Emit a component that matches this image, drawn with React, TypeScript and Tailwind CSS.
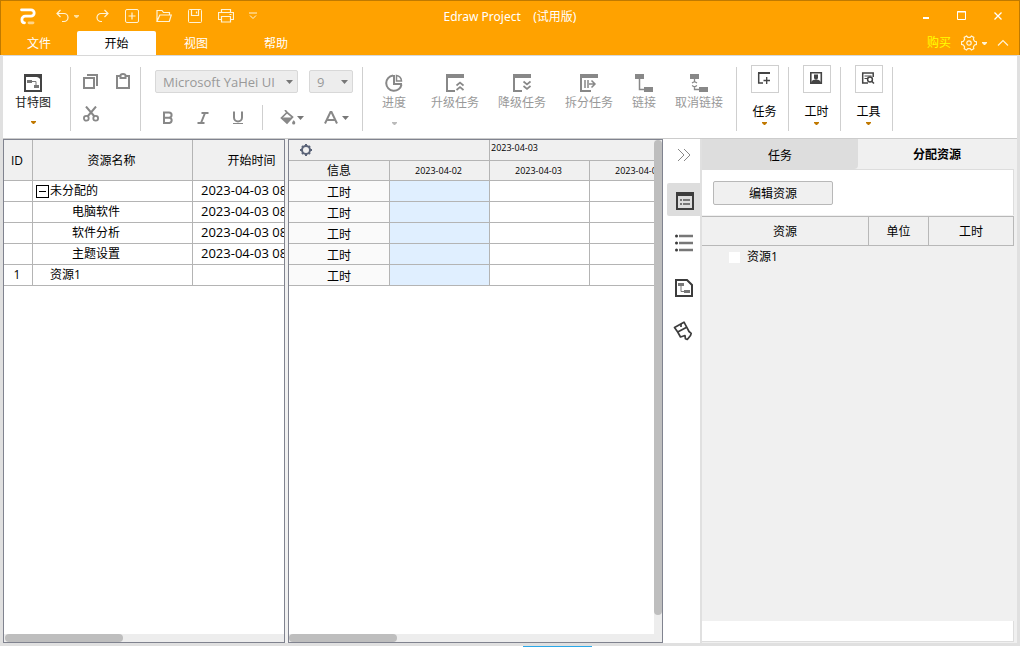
import React, { useState } from 'react'
import { clsx } from 'clsx'

interface ResourceRow {
  id: string
  name: string
  start: string
  level: 'group' | 'task' | 'resource'
}

const resources: ResourceRow[] = [
  { id: '', name: '未分配的', start: '2023-04-03 08', level: 'group' },
  { id: '', name: '电脑软件', start: '2023-04-03 08', level: 'task' },
  { id: '', name: '软件分析', start: '2023-04-03 08', level: 'task' },
  { id: '', name: '主题设置', start: '2023-04-03 08', level: 'task' },
  { id: '1', name: '资源1', start: '', level: 'resource' },
]

const days = ['2023-04-02', '2023-04-03', '2023-04-04']
const menuTabs = ['文件', '开始', '视图', '帮助']

function Caret({ className }: { className?: string }) {
  return (
    <svg width="7" height="4" viewBox="0 0 7 4" className={clsx('shrink-0', className)} fill="currentColor">
      <path d="M0 0h7L3.5 4z" />
    </svg>
  )
}

function SmallCaret({ className }: { className?: string }) {
  return (
    <svg width="5" height="3" viewBox="0 0 5 3" className={clsx('shrink-0', className)} fill="currentColor">
      <path d="M0 0h5v1L3 3H2L0 1z" />
    </svg>
  )
}

function Icon({ size = 18, children }: { size?: number; children: React.ReactNode }) {
  return (
    <svg width={size} height={size} viewBox={`0 0 ${size} ${size}`} fill="none" stroke="currentColor" className="shrink-0">
      {children}
    </svg>
  )
}

function Divider() {
  return <div className="w-px h-16 mt-[11px] shrink-0 bg-[#cfcfcf]" />
}

function Logo() {
  return (
    <svg width="16" height="17" viewBox="0 0 16 17" fill="none" strokeLinecap="round" strokeLinejoin="round">
      <path d="M1.5 1.8H11a3.2 3.2 0 0 1 0 6.4H5.5a3.3 3.3 0 0 0-3.6 3.3c0 2 .8 3.3 2.6 3.3" stroke="#fff" strokeWidth="2.8" />
      <path d="M9 14.8h4" stroke="#ffd58a" strokeWidth="2.8" />
    </svg>
  )
}

function TitleBar() {
  return (
    <div className="grid grid-cols-[1fr_auto_1fr] items-center h-[30px]">
      <div className="flex items-center text-[#fff3d6]">
        <div className="ml-[19px] mr-5"><Logo /></div>
        <button aria-label="撤销">
          <Icon size={14}><path d="M4.5 1L1 4.5 4.5 8M1.5 4.5H8a4 4 0 0 1 0 8H6" strokeWidth="1.2" /></Icon>
        </button>
        <SmallCaret className="ml-1 mr-4 text-[#ffe0a0]" />
        <button aria-label="恢复">
          <Icon size={14}><path d="M9.5 1L13 4.5 9.5 8M12.5 4.5H6a4 4 0 0 0 0 8h1" strokeWidth="1.2" /></Icon>
        </button>
        <button aria-label="新建" className="ml-4">
          <Icon size={14}><rect x="0.5" y="0.5" width="13" height="13" rx="1.5" /><path d="M7 3.5v7M3.5 7h7" strokeWidth="1.2" /></Icon>
        </button>
        <button aria-label="打开" className="ml-[17px]">
          <Icon size={16}><path d="M1 13.5V2.5h5l1.5 2h6V7M1 13.5L3.8 7h11.5l-2 6.5z" strokeWidth="1.2" /></Icon>
        </button>
        <button aria-label="保存" className="ml-4">
          <Icon size={14}><rect x="0.5" y="0.5" width="13" height="13" rx="1" /><path d="M3.5 1v5.5h7V1M8.5 2.5v2" strokeWidth="1.2" /></Icon>
        </button>
        <button aria-label="打印" className="ml-4">
          <Icon size={16}><path d="M3.5 4.5V1.5h9v3M3.5 11.5h-3v-7h15v7h-3M3.5 8.5h9v5.5h-9zM11.5 6.5h2" strokeWidth="1.2" /></Icon>
        </button>
        <button aria-label="自定义快速访问" className="ml-[15px]">
          <Icon size={8}><path d="M0 1h8M1 3.5L4 6.5l3-3" /></Icon>
        </button>
      </div>
      <h1 className="whitespace-pre pt-[2px] text-white font-['Noto_Sans','Noto_Sans_CJK_SC',sans-serif]">Edraw Project{'    '}(试用版)</h1>
      <div className="flex justify-end pr-[3px] text-white">
        <button aria-label="最小化" className="w-9 flex justify-center"><Icon size={10}><path d="M2 7h6" strokeWidth="2" /></Icon></button>
        <button aria-label="最大化" className="w-9 flex justify-center"><Icon size={10}><path d="M.5.5h8v8h-8zM0 1h9" /></Icon></button>
        <button aria-label="关闭" className="w-9 flex justify-center"><Icon size={10}><path d="M1.5 1.5l7 7M8.5 1.5l-7 7" strokeWidth="1.3" /></Icon></button>
      </div>
    </div>
  )
}

function MenuBar({ active, onSelect }: { active: string; onSelect: (tab: string) => void }) {
  return (
    <div className="flex h-6">
      {menuTabs.map(tab => (
        <button
          key={tab}
          onClick={() => onSelect(tab)}
          className={clsx(
            'h-full pt-[2px] first:w-[76px]',
            tab === active ? 'w-[79px] rounded-t-xs bg-white text-black' : 'w-20 text-white'
          )}
        >
          {tab}
        </button>
      ))}
      <div className="ml-auto flex items-center pr-[10px] text-[#fff3d6]">
        <a href="#buy" className="mr-[10px] text-[#ffff00]">购买</a>
        <button aria-label="设置">
          <Icon size={16}>
            <path d="M5.6 1l1.2 1.4h2.4L10.4 1l2.4 1.4-.4 1.9 1.2 2 1.9.5v2.6l-1.9.5-1.2 2 .4 1.8-2.4 1.4-1.2-1.4H6.8l-1.2 1.4-2.4-1.4.4-1.8-1.2-2L.5 9.4V6.8l1.9-.5 1.2-2-.4-1.9z" strokeWidth="1.2" />
            <circle cx="8" cy="8" r="2.2" strokeWidth="1.2" />
          </Icon>
        </button>
        <SmallCaret className="ml-[5px] mr-[10px]" />
        <button aria-label="折叠功能区">
          <Icon size={12}><path d="M1 8.5l5-5 5 5" strokeWidth="1.2" /></Icon>
        </button>
      </div>
    </div>
  )
}

function CommandButton({ label, caret, children }: { label: string; caret?: boolean; children: React.ReactNode }) {
  return (
    <button disabled className="flex flex-col items-center shrink-0 whitespace-nowrap pt-[18px] text-[#999] first:mr-[6px]">
      <span className="text-[#888]"><Icon>{children}</Icon></span>
      <span className="mt-[3px] leading-4">{label}</span>
      {caret && <SmallCaret className="mt-[11px] text-[#bbb]" />}
    </button>
  )
}

function BoxedButton({ label, children }: { label: string; children: React.ReactNode }) {
  return (
    <button className="flex flex-col items-center shrink-0 w-[51px] pl-1 pt-[9px] text-black">
      <span className="flex items-start justify-center w-7 h-7 pt-[5px] pr-[2px] border border-[#cfcfcf] text-[#444]">
        <Icon size={14}>{children}</Icon>
      </span>
      <span className="mt-[11px] leading-4">{label}</span>
      <SmallCaret className="mt-[2px] text-[#c07800]" />
    </button>
  )
}

function Ribbon() {
  return (
    <div className="flex items-start h-[83px] overflow-hidden border-b border-[#ccc] bg-white">
      <button className="flex flex-col items-center shrink-0 w-[67px] pr-[7px] pt-[18px] text-[#222]">
        <span className="text-[#444]">
          <Icon>
            <path d="M1 1h16v16H1z" strokeWidth="2" />
            <path d="M1 0h16v3H1zM11 2h6v6c0-3-2-5-6-5z" fill="currentColor" stroke="none" />
            <path d="M8 7.5h4v3.5" stroke="#777" />
            <path d="M3 6h5v3H3zM10 11h5v3h-5z" fill="#777" stroke="none" />
          </Icon>
        </span>
        <span className="mt-[3px] leading-4">甘特图</span>
        <SmallCaret className="mt-[10px] text-[#c07800]" />
      </button>
      <Divider />

      {/* Clipboard */}
      <div className="grid grid-cols-[16px_16px] gap-4 w-[69px] shrink-0 pl-3 pt-[17px] text-[#888]">
        <button aria-label="复制">
          <Icon size={16}><path d="M1 5h10v10H1z" strokeWidth="2" /><path d="M4 2h10v11" strokeWidth="2" /></Icon>
        </button>
        <button aria-label="粘贴">
          <Icon size={16}><path d="M2 3h12v12H2z" strokeWidth="2" /><path d="M5.5 2.5c0-2 5-2 5 0V5h-5z" strokeWidth="2" fill="#fff" /></Icon>
        </button>
        <button aria-label="剪切" className="pt-px">
          <Icon size={16}>
            <path d="M3 .5l8.5 10M13 .5l-8.5 10" strokeWidth="2" />
            <circle cx="3.3" cy="12.3" r="2.4" strokeWidth="1.8" />
            <circle cx="12.7" cy="12.3" r="2.4" strokeWidth="1.8" />
          </Icon>
        </button>
      </div>
      <Divider />

      {/* Font */}
      <div className="w-[221px] shrink-0 pl-[14px] pt-[14px]">
        <div className="flex gap-[11px]">
          <label className="flex items-center w-[143px] h-[23px] px-1 rounded-xs border border-[#d8d8d8] bg-[#ededed] text-[#999]">
            <select aria-label="字体" disabled className="flex-1 min-w-0 pl-[3px] appearance-none text-[13px] leading-5 opacity-100">
              <option>Microsoft YaHei UI</option>
            </select>
            <Caret className="text-[#777]" />
          </label>
          <label className="flex items-center w-11 h-[23px] px-1 rounded-xs border border-[#d8d8d8] bg-[#ededed] text-[#999]">
            <select aria-label="字号" disabled className="flex-1 min-w-0 pl-[3px] appearance-none text-[13px] leading-5 opacity-100">
              <option>9</option>
            </select>
            <Caret className="text-[#777]" />
          </label>
        </div>
        <div className="flex items-center mt-3 h-[25px] text-[#888]">
          <button aria-label="粗体" className="ml-[5px]">
            <Icon size={16}><path d="M4 2.5V13h5.5a2.7 2.7 0 0 0 0-5.3H4h5a2.5 2.5 0 0 0 0-5.2z" strokeWidth="2" /></Icon>
          </button>
          <button aria-label="斜体" className="ml-5">
            <Icon size={16}><path d="M5.5 3h7M1.5 13h7M9 3L5 13" strokeWidth="2" /></Icon>
          </button>
          <button aria-label="下划线" className="ml-[18px]">
            <Icon size={16}><path d="M4 1.5v6a4 4 0 0 0 8 0v-6" strokeWidth="2" /><path d="M3 13.5h10" /></Icon>
          </button>
          <div className="w-px h-full ml-4 bg-[#cfcfcf]" />
          <button className="flex items-center ml-[17px] gap-px" aria-label="填充颜色">
            <Icon size={16}>
              <path d="M5 0l2 2.5L1.5 8 7 13l5.5-6L7 2.5" strokeWidth="1.7" />
              <path d="M2 7.500h10.500L7 13zM13.800 10c.8 1.300 1.500 2 1.500 3a1.600 1.600 0 0 1-3.200 0c0-1 .9-1.700 1.700-3z" fill="currentColor" stroke="none" />
            </Icon>
            <Caret className="text-[#777]" />
          </button>
          <button className="flex items-center ml-5 gap-1" aria-label="字体颜色">
            <Icon size={14}><path d="M1 12.500L6.500 1h1L13 12.500M3.500 9h7" strokeWidth="2" /></Icon>
            <Caret className="text-[#777]" />
          </button>
        </div>
      </div>
      <Divider />

      {/* Task commands */}
      <div className="flex items-start gap-[19px] w-[373px] shrink-0 pl-[19px]">
        <CommandButton label="进度" caret>
          <path d="M8 1.500a7.700 7.700 0 1 0 8.500 9M9 1v9h8" strokeWidth="2" />
          <path d="M11.500 1.500A6 6 0 0 1 16.500 7h-5z" strokeWidth="1.5" />
        </CommandButton>
        <CommandButton label="升级任务">
          <path d="M0 2h18" strokeWidth="4" /><path d="M1 3v14h8" strokeWidth="2" />
          <path d="M10.500 11.500L14 8.500l3.500 3M10.500 16L14 13l3.500 3" strokeWidth="1.7" />
        </CommandButton>
        <CommandButton label="降级任务">
          <path d="M0 2h18" strokeWidth="4" /><path d="M1 3v14h8" strokeWidth="2" />
          <path d="M10.500 7.500L14 10.500l3.500-3M10.500 12L14 15l3.500-3" strokeWidth="1.7" />
        </CommandButton>
        <CommandButton label="拆分任务">
          <path d="M0 2h18" strokeWidth="4" /><path d="M1 3v14h10" strokeWidth="2" />
          <path d="M5 6v8M8 6v8M9 10h6M11.500 6.500L15 10l-3.500 3.500" strokeWidth="1.5" />
        </CommandButton>
        <CommandButton label="链接">
          <path d="M0 0h9v5H0zM9 13h9v5H9z" fill="currentColor" stroke="none" />
          <path d="M4.500 5v10.500H9" strokeWidth="1.5" />
        </CommandButton>
        <CommandButton label="取消链接">
          <path d="M0 0h9v5H0zM9 13h9v5H9z" fill="currentColor" stroke="none" />
          <path d="M4.500 5v3.500M4.500 12v3.500H9M2 9l2.500-1.500L7 9M2 11.500l2.500 1.500L7 11.500" strokeWidth="1.3" />
        </CommandButton>
      </div>
      <Divider />

      <BoxedButton label="任务">
        <path d="M1 2h12" strokeWidth="2" /><path d="M1.700 2v10H6" strokeWidth="1.5" />
        <path d="M6.500 9.500H13M9.700 6v7" strokeWidth="1.3" />
      </BoxedButton>
      <Divider />
      <BoxedButton label="工时">
        <path d="M1.800 1.800h10.500v10.500H1.800z" strokeWidth="1.6" />
        <path d="M2 12.500c0-2.500 2-4 5-4s5 1.500 5 4zM5 3.500h4v4l-2 1-2-1z" fill="currentColor" stroke="none" />
      </BoxedButton>
      <Divider />
      <BoxedButton label="工具">
        <path d="M7 12H1.700V2h10.500v4" strokeWidth="1.5" /><path d="M3.500 5h7M3.500 7.500H6" />
        <circle cx="9" cy="8.500" r="2.400" strokeWidth="1.5" /><path d="M10.700 10.200l2.300 2.300" strokeWidth="1.5" />
      </BoxedButton>
      <Divider />
    </div>
  )
}

function ResourceTable() {
  const [open, setOpen] = useState(true)
  const rows = open ? resources : resources.filter(r => r.level !== 'task')
  const cell = 'h-[21px] p-0 border-r border-b border-[#b4b4b4] leading-4'

  return (
    <section className="flex flex-col w-[282px] shrink-0 border border-[#80838f] bg-white">
      <div className="flex-1 min-h-0 overflow-hidden">
        <table className="w-[309px] table-fixed border-separate border-spacing-0 whitespace-nowrap">
          <colgroup>
            <col className="w-[29px]" />
            <col className="w-40" />
            <col className="w-[120px]" />
          </colgroup>
          <thead>
            <tr className="bg-[#f0f0f0]">
              {['ID', '资源名称', '开始时间'].map(h => (
                <th key={h} className="h-[41px] p-0 pt-[2px] pr-[2px] border-r border-b border-[#b4b4b4] font-normal">{h}</th>
              ))}
            </tr>
          </thead>
          <tbody>
            {rows.map(r => (
              <tr key={r.name}>
                <td className={clsx(cell, 'text-center pr-[2px]')}>{r.id}</td>
                <td className={cell}>
                  <div className={clsx(
                    'flex items-center gap-px',
                    r.level === 'group' && 'pl-[3px]',
                    r.level === 'task' && 'pl-[39px]',
                    r.level === 'resource' && 'pl-[17px]'
                  )}>
                    {r.level === 'group' && (
                      <button
                        aria-label="展开或折叠"
                        onClick={() => setOpen(!open)}
                        className="flex items-center justify-center w-[13px] h-[13px] border border-black"
                      >
                        <span className="w-[7px] h-px bg-black" />
                      </button>
                    )}
                    {r.name}
                  </div>
                </td>
                <td className={clsx(cell, 'pl-2 pb-[2px] text-[13px]')}>{r.start}</td>
              </tr>
            ))}
          </tbody>
        </table>
      </div>
      <div className="h-2 pl-px bg-[#ededed]">
        <div className="w-[118px] h-full rounded-full bg-[#bebebe]" />
      </div>
    </section>
  )
}

function Timeline() {
  return (
    <section className="flex flex-col flex-1 min-w-0 border border-[#80838f] bg-white">
      <div className="flex flex-1 min-h-0">
        <div className="flex-1 min-w-0 overflow-hidden">
          <table className="w-[401px] table-fixed border-separate border-spacing-0 whitespace-nowrap">
            <colgroup>
              <col className="w-[101px]" />
              <col className="w-[100px]" />
              <col className="w-[100px]" />
              <col className="w-[100px]" />
            </colgroup>
            <thead className="bg-[#f0f0f0]">
              <tr>
                <th colSpan={2} className="h-[21px] p-0 border-r border-b border-[#b4b4b4]">
                  <button aria-label="时间轴设置" className="flex ml-[10px] text-[#5b6478]">
                    <Icon size={14}>
                      <circle cx="7" cy="7" r="4" strokeWidth="2" />
                      <path d="M7 1v2M7 11v2M1 7h2M11 7h2M3 3l1 1M10 10l1 1M3 11l1-1M10 4l1-1" strokeWidth="2" />
                    </Icon>
                  </button>
                </th>
                <th colSpan={2} className="p-0 pl-px pb-1 border-b border-[#b4b4b4] text-left align-top text-[9px] leading-4 font-normal">2023-04-03</th>
              </tr>
              <tr>
                <th className="h-5 p-0 border-r border-b border-[#b4b4b4] font-normal leading-4">信息</th>
                {days.map(d => (
                  <th key={d} className="p-0 pr-[2px] border-r border-b border-[#b4b4b4] text-[9px] leading-4 font-normal">{d}</th>
                ))}
              </tr>
            </thead>
            <tbody>
              {resources.map(r => (
                <tr key={r.name}>
                  <td className="h-[21px] p-0 pt-1 border-r border-b border-[#b4b4b4] bg-[#fafafa] text-center leading-4">工时</td>
                  {days.map((d, i) => (
                    <td key={d} className={clsx('p-0 border-r border-b border-[#b4b4b4]', i === 0 && 'bg-[#e0efff]')} />
                  ))}
                </tr>
              ))}
            </tbody>
          </table>
        </div>
        <div className="w-2 pb-[19px] bg-[#ededed]">
          <div className="h-full rounded-full bg-[#bebebe]" />
        </div>
      </div>
      <div className="h-2 bg-[#ededed]">
        <div className="w-[108px] h-full rounded-full bg-[#bebebe]" />
      </div>
    </section>
  )
}

function SideBar() {
  return (
    <nav className="flex flex-col w-[37px] shrink-0 pl-1 bg-white text-[#3c3c3c]">
      <button aria-label="收起面板" className="flex items-center justify-center h-8 text-[#888]">
        <Icon size={14}><path d="M1 1l6 6-6 6M7 1l6 6-6 6" /></Icon>
      </button>
      <button aria-label="任务窗格" className="flex items-center justify-center h-[33px] mt-3 pl-[3px] pt-[3px] rounded-l-xs bg-[#ddd]">
        <Icon>
          <path d="M1 2h16v15H1z" strokeWidth="2" /><path d="M0 2h18" strokeWidth="4" />
          <path d="M4 8h2M7 8h7M4 12h2M7 12h7" strokeWidth="2" stroke="#777" />
        </Icon>
      </button>
      <button aria-label="列表" className="flex items-center justify-center h-[33px] mt-[10px]">
        <Icon>
          <path d="M1.500 2h.01M1.500 9h.01M1.500 16h.01" strokeWidth="3" strokeLinecap="round" />
          <path d="M4 2h14M4 9h14M4 16h14" strokeWidth="2.600" stroke="#777" />
        </Icon>
      </button>
      <button aria-label="页面" className="flex items-center justify-center h-[33px] mt-3">
        <Icon>
          <path d="M1 1h11l5 5v11H1z" strokeWidth="2" />
          <path d="M3 4h6v3H3zM9 11h6v3H9z" fill="#777" stroke="none" /><path d="M6 7v5.500h3" stroke="#777" />
        </Icon>
      </button>
      <button aria-label="格式刷" className="flex items-center justify-center h-[33px] mt-[10px] pr-[2px]">
        <Icon size={20}>
          <path d="M1.500 6.500L11 1.200l2.700 5L16 10.500l2.200 1.800-.7 2.200-3.200 4-1.900-.8-.4-3.200-4.500 1.500L4.700 11z" strokeWidth="1.7" strokeLinejoin="round" />
          <path d="M4.700 11l9-4.800M8 3v3" strokeWidth="1.7" />
        </Icon>
      </button>
    </nav>
  )
}

function AssignPanel() {
  const [tab, setTab] = useState('分配资源')
  return (
    <aside className="flex flex-col w-[317px] shrink-0 pr-[3px] border-l-2 border-[#e0e0e0] bg-[#f0f0f0]">
      <div className="flex h-[30px]">
        {['任务', '分配资源'].map(t => (
          <button
            key={t}
            onClick={() => setTab(t)}
            className={clsx('w-1/2', t === tab ? 'pt-[2px] pl-[2px] font-bold' : 'pt-1 rounded-br-sm bg-[#ddd]')}
          >
            {t}
          </button>
        ))}
      </div>
      <div className="h-[46px] pl-[11px] pt-[11px] border-t border-r border-[#ddd] bg-white">
        <button className="w-[120px] h-6 pt-[2px] rounded-xs border border-[#b8b8b8] bg-[#f0f0f0]">编辑资源</button>
      </div>
      <table className="w-full mt-px table-fixed border-separate border-spacing-0">
        <colgroup>
          <col />
          <col className="w-[60px]" />
          <col className="w-[85px]" />
        </colgroup>
        <thead>
          <tr>
            {['资源', '单位', '工时'].map(h => (
              <th key={h} className="h-[30px] p-0 pt-[2px] border-y border-r border-[#b8b8b8] font-normal">{h}</th>
            ))}
          </tr>
        </thead>
        <tbody>
          <tr>
            <td className="h-[22px] p-0">
              <label className="flex items-center gap-[7px] pl-[27px]">
                <input type="checkbox" className="w-[11px] h-[11px] appearance-none bg-white checked:bg-[#ffa200]" />
                资源1
              </label>
            </td>
            <td className="p-0" />
            <td className="p-0" />
          </tr>
        </tbody>
      </table>
      <div className="h-[21px] mt-auto mb-px border-r border-b border-[#ddd] bg-white" />
    </aside>
  )
}

export default function App() {
  const [activeTab, setActiveTab] = useState('开始')
  return (
    <div className="flex flex-col h-screen pr-px bg-white text-xs text-black font-['Open_Sans','Noto_Sans_CJK_SC',sans-serif]">
      <header className="border-t border-x border-[#c07a00] bg-[#ffa200]">
        <TitleBar />
        <MenuBar active={activeTab} onSelect={setActiveTab} />
      </header>
      <div className="flex flex-col flex-1 min-h-0 border-x-3 border-b-3 border-[#e0e0e0]">
        <div className="border-t border-[#d8d8d8]">
          <Ribbon />
        </div>
        <main className="flex flex-1 min-h-0 bg-[#f0f0f0]">
          <ResourceTable />
          <div className="w-[3px] shrink-0" />
          <Timeline />
          <SideBar />
          <AssignPanel />
        </main>
      </div>
      <div className="flex justify-center h-px pl-[95px]">
        <div className="w-[69px] bg-[#2aa8e8]" />
      </div>
    </div>
  )
}
